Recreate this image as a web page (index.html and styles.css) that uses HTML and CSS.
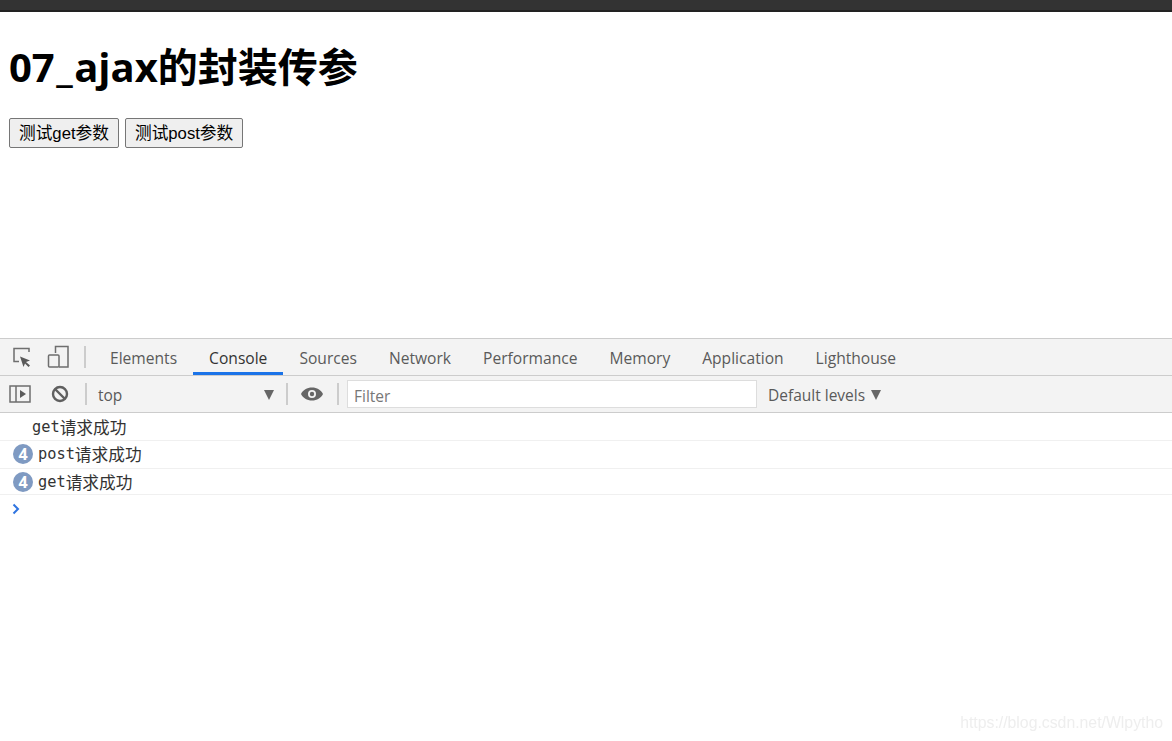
FILE: index.html
```html
<!DOCTYPE html>
<html lang="en">
<head>
    <meta charset="UTF-8">
    <meta name="viewport" content="width=device-width, initial-scale=1.0">
    <title>07_ajax的封装传参</title>
    <link rel="stylesheet" href="styles.css">
</head>
<body>
    <div class="top-bar"></div>
    <div class="page">
        <h1>07<span class="underscore">_</span>ajax的封装传参</h1>
        <div class="buttons">
            <button type="button">测试get参数</button>
            <button type="button">测试post参数</button>
        </div>
    </div>
    <div class="devtools">
        <div class="tab-bar">
            <svg class="icon-inspect" width="24" height="24" viewBox="0 0 24 24">
                <path d="M9 16.500H4V3.500H19V7" fill="none" stroke="#6e6e6e" stroke-width="1.500"/>
                <path d="M10 11.500l10 4-4 1.500 4 3.500-1.500 1.500-3.500-3.500-1.500 3.500z" fill="#5a5a5a"/>
            </svg>
            <svg class="icon-device" width="24" height="24" viewBox="0 0 24 24">
                <path d="M8.500 8V1.500h12.500v20.500H12" fill="none" stroke="#6e6e6e" stroke-width="1.500"/>
                <rect x="1.500" y="10" width="10.500" height="12" rx="1" fill="none" stroke="#6e6e6e" stroke-width="1.500"/>
            </svg>
            <span class="divider tab-divider"></span>
            <div class="tabs">
                <span class="tab">Elements</span>
                <span class="tab active">Console</span>
                <span class="tab">Sources</span>
                <span class="tab">Network</span>
                <span class="tab">Performance</span>
                <span class="tab">Memory</span>
                <span class="tab">Application</span>
                <span class="tab">Lighthouse</span>
            </div>
        </div>
        <div class="toolbar">
            <svg class="icon-sidebar" width="22" height="18" viewBox="0 0 22 18">
                <rect x="1" y="1" width="20" height="16" fill="none" stroke="#6e6e6e" stroke-width="1.500"/>
                <path d="M7 1v16" stroke="#6e6e6e" stroke-width="1.500"/>
                <path d="M11 5l6 4-6 4z" fill="#5a5a5a"/>
            </svg>
            <svg class="icon-clear" width="18" height="18" viewBox="0 0 18 18">
                <circle cx="9" cy="9" r="7" fill="none" stroke="#5f5f5f" stroke-width="2.400"/>
                <path d="M4 4l10 10" stroke="#5f5f5f" stroke-width="2.400"/>
            </svg>
            <span class="divider"></span>
            <div class="context">
                <span>top</span>
                <span class="arrow"></span>
            </div>
            <span class="divider"></span>
            <svg class="icon-eye" width="24" height="16" viewBox="0 0 24 16">
                <path fill-rule="evenodd" d="M12 1.500C7 1.500 3 4 1 8c2 4 6 6.500 11 6.500S21 12 23 8c-2-4-6-6.500-11-6.500zM12 4a4 4 0 1 1 0 8 4 4 0 0 1 0-8z" fill="#666"/>
                <circle cx="12" cy="8" r="2.200" fill="#666"/>
            </svg>
            <span class="divider"></span>
            <div class="filter">Filter</div>
            <div class="levels">
                <span>Default levels</span>
                <span class="arrow"></span>
            </div>
        </div>
        <div class="console">
            <div class="row row-first"><span class="mono">get</span><span class="cjk">请求成功</span></div>
            <div class="row row-second"><span class="badge">4</span><span class="mono">post</span><span class="cjk">请求成功</span></div>
            <div class="row row-last"><span class="badge">4</span><span class="mono">get</span><span class="cjk">请求成功</span></div>
            <div class="prompt">
                <svg width="10" height="12" viewBox="0 0 10 12">
                    <path d="M2.500 1.500L7 6l-4.500 4.500" fill="none" stroke="#2f74e0" stroke-width="2"/>
                </svg>
            </div>
        </div>
    </div>
    <div class="watermark">https://blog.csdn.net/Wlpytho</div>
</body>
</html>
```

FILE: styles.css
```css
html,
body {
    margin: 0;
    height: 100%;
    overflow: hidden;
    background: #fff;
}

body {
    display: flex;
    flex-direction: column;
    height: 741px;
}

.top-bar {
    height: 10px;
    background: #333;
    border-bottom: 2px solid #222;
}

.page {
    height: 326px;
    padding: 0 9px;
}

h1 {
    margin: 0;
    padding-top: 25px;
    font-family: "Open Sans", "Noto Sans CJK SC", sans-serif;
    font-size: 40px;
    font-weight: 700;
    line-height: 60px;
    color: #000;
}

.underscore {
    margin: 0 1.500px;
}

.buttons {
    display: flex;
    gap: 6px;
    margin-top: 21px;
}

button {
    height: 30px;
    padding: 0 9px 2px;
    font-family: "Liberation Sans", "Noto Sans CJK SC", sans-serif;
    font-size: 16.700px;
    color: #000;
    background: #efefef;
    border: 1px solid #767676;
    border-radius: 2px;
}

.devtools {
    flex: 1;
    display: flex;
    flex-direction: column;
    font-family: "Open Sans", sans-serif;
    color: #5a5a5a;
}

.tab-bar {
    display: flex;
    align-items: center;
    height: 36px;
    background: #f3f3f3;
    border-top: 1px solid #ccc;
    border-bottom: 1px solid #ccc;
}

.icon-inspect {
    margin-left: 10px;
}

.icon-device {
    margin-left: 13px;
}

.divider {
    width: 2px;
    height: 22px;
    background: #ccc;
}

.tab-divider {
    margin-left: 13px;
    margin-right: 8px;
}

.tabs {
    display: flex;
    align-self: stretch;
}

.tab {
    display: flex;
    align-items: center;
    padding: 2px 16px 0;
    font-size: 15.600px;
}

.tab.active {
    color: #333;
    box-shadow: inset 0 -3px 0 #1a73e8;
}

.toolbar {
    display: flex;
    align-items: center;
    height: 36px;
    background: #f3f3f3;
    border-bottom: 1px solid #ccc;
    font-size: 15.500px;
}

.icon-sidebar {
    margin-left: 9px;
}

.icon-clear {
    margin-left: 20px;
    margin-right: 16px;
}

.context {
    display: flex;
    align-items: center;
    justify-content: space-between;
    width: 199px;
    padding: 2px 12px 0 11px;
    box-sizing: border-box;
}

.arrow {
    width: 0;
    height: 0;
    border-left: 5.500px solid transparent;
    border-right: 5.500px solid transparent;
    border-top: 10px solid #666;
}

.icon-eye {
    margin-left: 12px;
    margin-right: 13px;
}

.filter {
    width: 410px;
    height: 28px;
    margin-left: 8px;
    padding-left: 6px;
    box-sizing: border-box;
    background: #fff;
    border: 1px solid #ddd;
    color: #777;
    line-height: 28px;
    padding-top: 1px;
}

.levels {
    display: flex;
    align-items: center;
    gap: 6px;
    margin-left: 11px;
    padding-top: 2px;
}

.console {
    flex: 1;
    color: #333;
}

.row {
    display: flex;
    align-items: center;
    box-sizing: border-box;
    height: 28px;
    padding-left: 13px;
    border-bottom: 1px solid #f0f0f0;
}

.row-first {
    padding-left: 32px;
}

.row-second {
    padding-bottom: 2px;
}

.row-last {
    height: 26px;
}

.mono {
    font-family: "DejaVu Sans Mono", monospace;
    font-size: 15.300px;
}

.cjk {
    font-family: "Noto Sans CJK SC", sans-serif;
    font-size: 16.700px;
}

.badge {
    display: flex;
    align-items: center;
    justify-content: center;
    width: 20px;
    height: 20px;
    margin-right: 5px;
    border-radius: 50%;
    background: #7f9ac2;
    color: #fff;
    font-family: "Open Sans", sans-serif;
    font-size: 16px;
    font-weight: 700;
}

.prompt {
    display: flex;
    align-items: center;
    height: 28px;
    padding-left: 11px;
}

.watermark {
    position: absolute;
    right: 9px;
    top: 714px;
    font-family: "Liberation Sans", sans-serif;
    font-size: 15.800px;
    color: #eee;
    filter: blur(0.4px);
}
```
